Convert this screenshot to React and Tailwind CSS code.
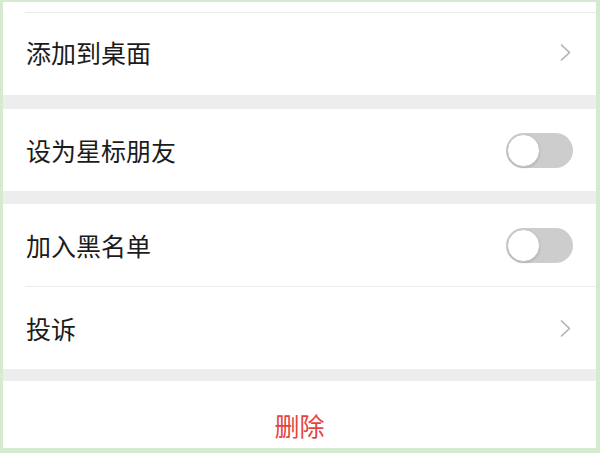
import React from 'react';

function Chevron() {
    return (
        <svg width="13" height="19" viewBox="0 0 13 19" fill="none">
            <path d="M2.5 2 L10.5 9.5 L2.5 17" stroke="#b2b2b2" strokeWidth="1.7" strokeLinecap="round" strokeLinejoin="round" />
        </svg>
    );
}

function Toggle() {
    return (
        <div className="w-[67px] h-[35px] rounded-full bg-[#cdcdcd] relative">
            <div className="absolute left-[1px] top-[1px] w-[33px] h-[33px] rounded-full bg-white border border-[#c4c4c4] shadow-[0_1px_2px_rgba(0,0,0,0.15)]" />
        </div>
    );
}

function Row({ label, right, divider, textClass = '' }) {
    return (
        <div className="bg-white">
            <div className="flex items-center justify-between h-[82px] pl-[23px] pr-[23px]">
                <span className={`text-[25px] text-[#1b1b1b] leading-none ${textClass}`}>{label}</span>
                {right}
            </div>
            {divider && <div className="ml-[22px] h-px bg-[#ececec]" />}
        </div>
    );
}

export default function App() {
    return (
        <div
            className="w-[600px] h-[453px] bg-[#d5ebd0] pt-[2px] pl-[3px] pr-[4px] pb-[5px]"
            style={{ fontFamily: '"Noto Sans CJK SC", "Noto Sans", sans-serif' }}
        >
            <div className="h-full bg-[#ededed] overflow-hidden flex flex-col">
                {/* top leftover of previous group */}
                <div className="bg-white pt-[10px]">
                    <div className="ml-[22px] h-px bg-[#ececec]" />
                </div>
                <Row label="添加到桌面" textClass="-mt-[3px]" right={<div className="mr-[1px] -mt-[3px]"><Chevron /></div>} />

                <div className="h-[14px] shrink-0" />
                <Row label="设为星标朋友" right={<Toggle />} />

                <div className="h-[13px] shrink-0" />
                <Row label="加入黑名单" right={<Toggle />} divider />
                <Row label="投诉" right={<div className="mr-[1px]"><Chevron /></div>} />

                <div className="h-[12px] shrink-0" />
                <div className="bg-white h-[88px] shrink-0 flex items-center justify-center">
                    <span className="text-[25px] text-[#e64340] leading-none">删除</span>
                </div>
            </div>
        </div>
    );
}
